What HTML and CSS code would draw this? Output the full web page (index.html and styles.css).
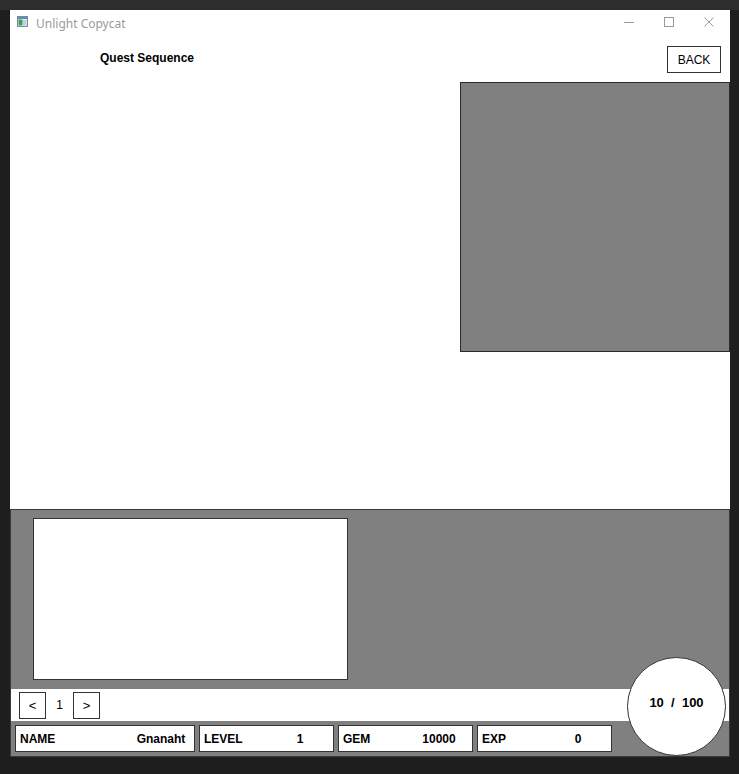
FILE: index.html
```html
<!DOCTYPE html>
<html lang="en">
<head>
<meta charset="utf-8">
<title>Unlight Copycat</title>
<link rel="stylesheet" href="styles.css">
</head>
<body>
<div class="ide-strip"></div>
<div class="window">
  <div class="titlebar">
    <svg class="app-icon" width="11" height="11" viewBox="0 0 11 11">
      <rect x="0.5" y="0.5" width="10" height="10" fill="#e8eef2" stroke="#7a8a96"/>
      <rect x="1" y="1" width="9" height="2" fill="#5a8fc0"/>
      <rect x="1.5" y="3.5" width="4" height="6" fill="#3aa05a"/>
      <rect x="6" y="4" width="3.5" height="5.5" fill="#bcd0de"/>
    </svg>
    <span class="title">Unlight Copycat</span>
    <div class="controls">
      <svg class="ctl" width="10" height="10" viewBox="0 0 10 10"><line x1="0" y1="5.5" x2="10" y2="5.5" stroke="#9a9a9a" stroke-width="1"/></svg>
      <svg class="ctl" width="10" height="10" viewBox="0 0 10 10"><rect x="0.5" y="0.5" width="9" height="9" fill="none" stroke="#9a9a9a" stroke-width="1"/></svg>
      <svg class="ctl" width="10" height="10" viewBox="0 0 10 10"><path d="M0.5 0.5 L9.5 9.5 M9.5 0.5 L0.5 9.5" stroke="#9a9a9a" stroke-width="1"/></svg>
    </div>
  </div>

  <div class="main">
    <div class="header">
      <div class="heading">Quest Sequence</div>
      <button class="back">BACK</button>
    </div>
    <div class="preview"></div>
  </div>

  <div class="bottom">
    <div class="detail"></div>
    <div class="pager">
      <button class="pg">&lt;</button>
      <span class="page">1</span>
      <button class="pg">&gt;</button>
    </div>
    <div class="status">
      <div class="stat wide"><span class="k">NAME</span><span class="v">Gnanaht</span></div>
      <div class="stat"><span class="k">LEVEL</span><span class="v">1</span></div>
      <div class="stat"><span class="k">GEM</span><span class="v">10000</span></div>
      <div class="stat"><span class="k">EXP</span><span class="v">0</span></div>
    </div>
    <div class="ap">10  /  100</div>
  </div>
</div>
</body>
</html>
```

FILE: styles.css
```css
* { box-sizing: border-box; }

html, body {
  margin: 0;
  padding: 0;
}

body {
  background: #1e1e1e;
  width: 739px;
  height: 774px;
  overflow: hidden;
  font-family: "Liberation Sans", Arial, sans-serif;
  color: #000;
}

.ide-strip {
  height: 10px;
  background: #2d2d30;
}

.window {
  margin-left: 10px;
  width: 720px;
  height: 747px;
  background: #fff;
  display: flex;
  flex-direction: column;
}

/* title bar */
.titlebar {
  height: 31px;
  display: flex;
  align-items: flex-start;
  background: #fff;
}

.app-icon {
  margin-left: 7px;
  margin-top: 6px;
  flex: none;
}

.title {
  margin-left: 8px;
  margin-top: 5px;
  font-family: "Noto Sans", "Open Sans", sans-serif;
  font-size: 12px;
  line-height: 17px;
  color: #9a9a9a;
}

.controls {
  margin-left: auto;
  margin-right: 16px;
  margin-top: 7px;
  display: flex;
  gap: 30px;
}

.ctl { display: block; }

/* main area */
.main {
  height: 468px;
  display: flex;
  flex-direction: column;
  background: #fff;
}

.header {
  height: 33px;
  display: flex;
  align-items: flex-start;
}

.heading {
  margin-left: 90px;
  margin-top: 10px;
  font-size: 12px;
  line-height: 14px;
  font-weight: bold;
}

.back {
  margin-left: auto;
  margin-right: 9px;
  margin-top: 5px;
  width: 54px;
  height: 27px;
  padding: 0;
  background: #fff;
  border: 1px solid #333;
  font-family: "Liberation Sans", Arial, sans-serif;
  font-size: 12px;
  color: #000;
}

.preview {
  margin-top: 8px;
  align-self: flex-end;
  width: 270px;
  height: 270px;
  background: #808080;
  border: 1px solid #2a2a2a;
}

/* bottom panel */
.bottom {
  position: relative;
  height: 248px;
  background: #808080;
  border: 1px solid #3a3a3a;
  display: flex;
  flex-direction: column;
}

.detail {
  margin-top: 8px;
  margin-left: 22px;
  width: 315px;
  height: 162px;
  background: #fff;
  border: 1px solid #333;
}

.pager {
  margin-top: 9px;
  height: 32px;
  background: #fff;
  display: flex;
  align-items: center;
  padding-left: 8px;
}

.pg {
  width: 27px;
  height: 27px;
  padding: 0;
  background: #fff;
  border: 1px solid #333;
  font-family: "Liberation Sans", Arial, sans-serif;
  font-size: 13px;
  color: #000;
}

.page {
  width: 27px;
  text-align: center;
  font-size: 12px;
}

.status {
  height: 35px;
  display: flex;
  gap: 4px;
  padding: 4px 0 0 4px;
}

.stat {
  width: 135px;
  height: 27px;
  background: #fff;
  border: 1px solid #333;
  display: flex;
  align-items: center;
  font-size: 12px;
  font-weight: bold;
  padding-left: 4px;
}

.stat.wide { width: 180px; }

.k { flex: 1; }

.v {
  width: 64px;
  text-align: center;
  margin-right: 1px;
}

.ap {
  position: absolute;
  left: 616px;
  top: 147px;
  width: 99px;
  height: 99px;
  border-radius: 50%;
  background: #fff;
  border: 1px solid #333;
  display: flex;
  align-items: center;
  justify-content: center;
  padding-bottom: 8px;
  font-size: 13px;
  font-weight: bold;
  white-space: pre;
}
```
